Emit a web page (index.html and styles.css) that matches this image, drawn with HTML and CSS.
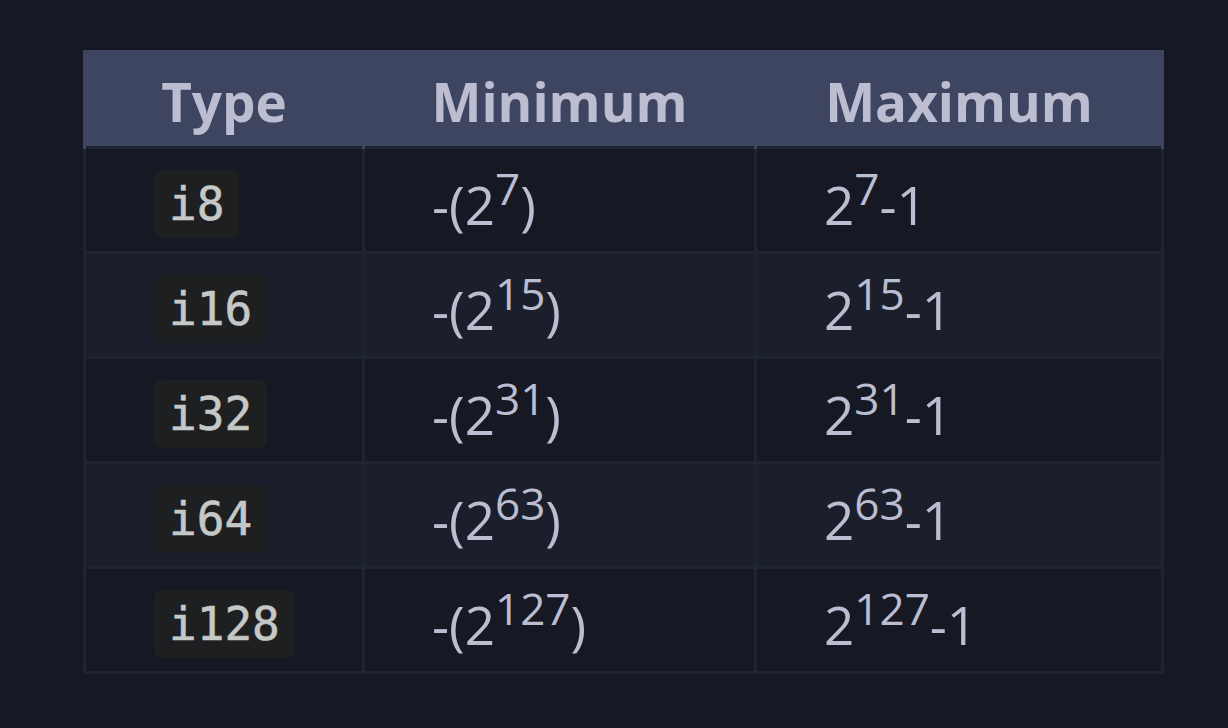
FILE: index.html
```html
<!DOCTYPE html>
<html lang="en">
<head>
    <meta charset="UTF-8">
    <title>Integer Types</title>
    <link rel="stylesheet" href="styles.css">
</head>
<body>
    <div class="page">
        <table class="int-table">
            <colgroup>
                <col class="col-type">
                <col class="col-min">
                <col class="col-max">
            </colgroup>
            <thead>
                <tr>
                    <th>Type</th>
                    <th>Minimum</th>
                    <th>Maximum</th>
                </tr>
            </thead>
            <tbody>
                <tr>
                    <td><code>i8</code></td>
                    <td class="num">-(2<sup>7</sup>)</td>
                    <td class="num">2<sup>7</sup>-1</td>
                </tr>
                <tr>
                    <td><code>i16</code></td>
                    <td class="num">-(2<sup>15</sup>)</td>
                    <td class="num">2<sup>15</sup>-1</td>
                </tr>
                <tr>
                    <td><code>i32</code></td>
                    <td class="num">-(2<sup>31</sup>)</td>
                    <td class="num">2<sup>31</sup>-1</td>
                </tr>
                <tr>
                    <td><code>i64</code></td>
                    <td class="num">-(2<sup>63</sup>)</td>
                    <td class="num">2<sup>63</sup>-1</td>
                </tr>
                <tr>
                    <td><code>i128</code></td>
                    <td class="num">-(2<sup>127</sup>)</td>
                    <td class="num">2<sup>127</sup>-1</td>
                </tr>
            </tbody>
        </table>
    </div>
</body>
</html>
```

FILE: styles.css
```css
body, html {
    margin: 0;
    padding: 0;
    background-color: #161923;
    color: #bcbdd0;
    font-family: "Open Sans", "Liberation Sans", sans-serif;
}

.page {
    padding: 50px 0 0 83px;
}

.int-table {
    border-collapse: collapse;
    table-layout: fixed;
    width: 1081px;
    font-size: 53px;
    line-height: 76px;
}

.col-type {
    width: 279px;
}

.col-min {
    width: 392px;
}

.int-table th {
    background-color: #3d4561;
    font-weight: 700;
    padding: 11px 65px 6px;
    border: 3px solid #3d4561;
    border-bottom: none;
    text-align: center;
}

.int-table td {
    padding: 13px 65px 13px 67px;
    border: 3px solid #1f2432;
    text-align: left;
    vertical-align: middle;
    white-space: nowrap;
}

.int-table td.num {
    padding-top: 18px;
    padding-bottom: 8px;
}

.int-table tbody tr:nth-child(2n) {
    background-color: #1b1f2c;
}

sup {
    font-size: 44px;
    line-height: 0;
    vertical-align: 20px;
}

code {
    font-family: "DejaVu Sans Mono", "Liberation Mono", monospace;
    font-size: 46px;
    line-height: 1;
    color: #c5c8c6;
    background-color: #1e1f21;
    padding: 7px 15px;
    margin-left: 1px;
    border-radius: 8px;
    -webkit-text-stroke: 0.6px #c5c8c6;
}
```
